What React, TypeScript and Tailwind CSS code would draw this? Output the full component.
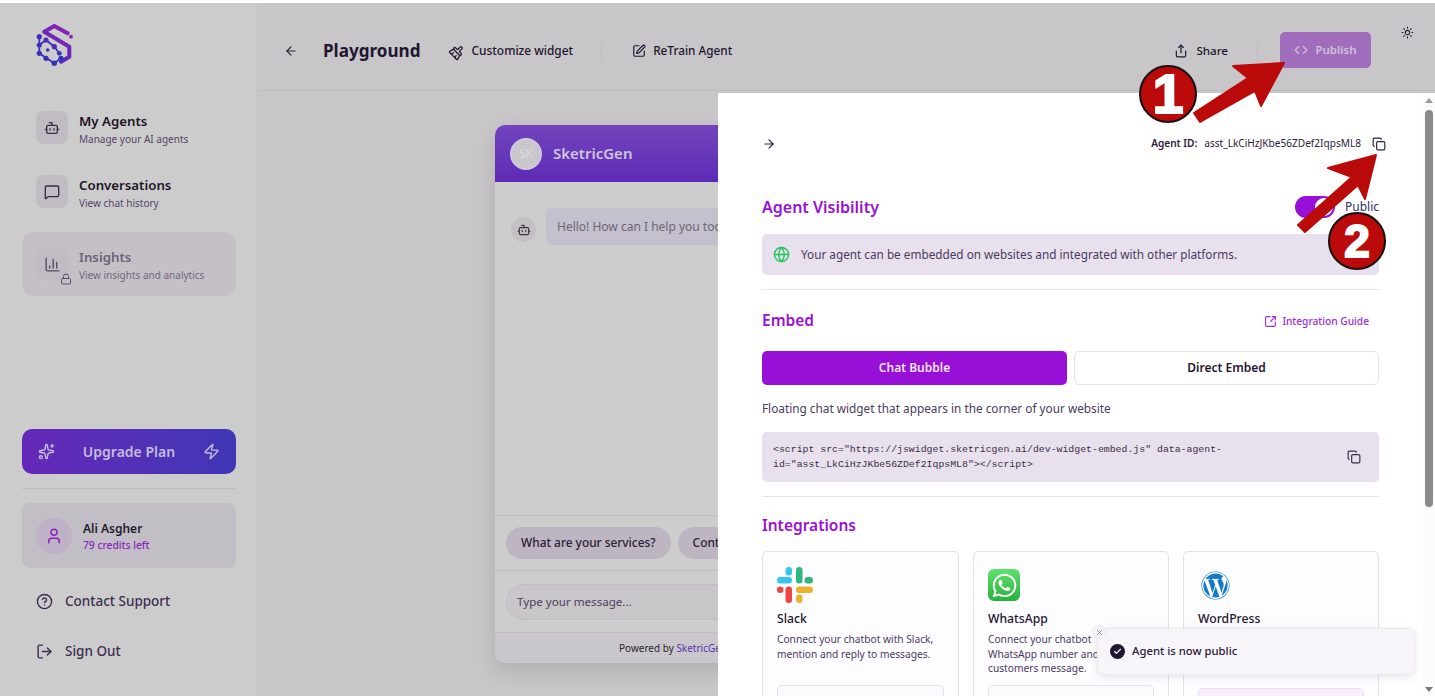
import {
  ArrowLeft,
  ArrowRight,
  Bot,
  BrushCleaning,
  ChartColumn,
  Check,
  CircleHelp,
  Code,
  Copy,
  Globe,
  Lock,
  LogOut,
  MessageSquare,
  Share,
  Sparkles,
  SquareArrowOutUpRight,
  SquarePen,
  Sun,
  User,
  X,
  Zap,
} from 'lucide-react';
import { FaWhatsapp, FaWordpress } from 'react-icons/fa';

function Logo() {
  return (
    <svg width="38" height="44" viewBox="0 0 38 44" fill="none">
      <defs>
        <linearGradient id="logo" x1="30" y1="4" x2="8" y2="36" gradientUnits="userSpaceOnUse">
          <stop stopColor="#8a22b8" />
          <stop offset="1" stopColor="#4a2cb8" />
        </linearGradient>
      </defs>
      <path
        d="M31.7 9.3 18.3 1.900 8.300 7.700l25 15v10L25 37.700"
        stroke="url(#logo)"
        strokeWidth="4"
        strokeLinejoin="round"
        strokeLinecap="round"
      />
      <path
        d="M3.300 12.700v16.600l15 10 6.700-5M10 16l8.300 6.700 5 6.600M3.300 21 10 16"
        stroke="#3a32b8"
        strokeWidth="1.800"
      />
      <circle cx="35" cy="12.700" r="1.900" fill="#8a22b8" />
      <circle cx="3.300" cy="12.700" r="2.600" fill="#4030b8" />
      <circle cx="3.300" cy="21" r="2.600" fill="#3a32b8" />
      <circle cx="3.300" cy="29.300" r="2.600" fill="#3532b8" />
      <circle cx="10" cy="34.300" r="2.600" fill="#3532b8" />
      <circle cx="18.300" cy="39.300" r="2.700" fill="#2f35b5" />
      <circle cx="25" cy="34.300" r="2.600" fill="#3532b8" />
      <circle cx="10" cy="16" r="2.600" fill="#4a2fb8" />
      <circle cx="18.300" cy="22.700" r="2.600" fill="#4a2fb8" />
      <circle cx="23.300" cy="29.300" r="2.400" fill="#3c32b8" />
      <circle cx="11.700" cy="26" r="1.800" fill="#3c32b8" />
    </svg>
  );
}

function SlackLogo() {
  return (
    <svg width="36" height="36" viewBox="0 0 36 36">
      <rect x="0" y="10" width="15" height="6.500" rx="3.250" fill="#36c5f0" />
      <rect x="8.500" y="0" width="6.500" height="8.500" rx="3.250" fill="#36c5f0" />
      <rect x="19" y="0" width="6.500" height="16.500" rx="3.250" fill="#2eb67d" />
      <rect x="27.500" y="10" width="8.500" height="6.500" rx="3.250" fill="#2eb67d" />
      <rect x="0" y="19.500" width="6.500" height="6.500" rx="3.250" fill="#ef4444" />
      <rect x="8.500" y="19.500" width="6.500" height="16.500" rx="3.250" fill="#ef4444" />
      <rect x="19" y="19.500" width="17" height="6.500" rx="3.250" fill="#ecb22e" />
      <rect x="19" y="27.500" width="6.500" height="8.500" rx="3.250" fill="#ecb22e" />
    </svg>
  );
}

function NavItem({
  icon,
  title,
  sub,
}: {
  icon: React.ReactNode;
  title: string;
  sub: string;
}) {
  return (
    <div className="flex items-start gap-[11px] px-[14px]">
      <div className="flex h-[33px] w-[32px] items-center justify-center rounded-[8px] bg-[#c1bcc3] text-[#3b2a4a]">
        {icon}
      </div>
      <div className="pt-[1px]">
        <div className="text-[13.25px] font-semibold leading-[18px] text-[#1d1426]">{title}</div>
        <div className="text-[10px] leading-[18px] text-[#56456a]">{sub}</div>
      </div>
    </div>
  );
}

function Sidebar() {
  return (
    <aside className="flex w-[258px] shrink-0 flex-col border-r border-[#c2bfc5] bg-[#cccccc] pl-[22px] pr-[21px]">
      <div className="mt-[21px] ml-[14px] h-[44px] shrink-0">
        <Logo />
      </div>
      <div className="mt-[43px]">
        <NavItem icon={<Bot size={16} />} title="My Agents" sub="Manage your AI agents" />
      </div>
      <div className="mt-[27px]">
        <NavItem icon={<MessageSquare size={16} />} title="Conversations" sub="View chat history" />
      </div>
      <div className="mt-[20px] flex h-[64px] shrink-0 items-center gap-[11px] rounded-[12px] bg-[#c4c0c6] px-[14px]">
        <div className="relative flex h-[33px] w-[32px] items-center justify-center rounded-[8px] bg-[#c1bcc3] text-[#5a4c68]">
          <ChartColumn size={17} />
          <Lock size={12} className="absolute -right-[4px] -bottom-[4px] text-[#5a4c68]" />
        </div>
        <div className="pt-[3px]">
          <div className="text-[13.25px] font-semibold leading-[18px] text-[#6e6078]">Insights</div>
          <div className="text-[10px] leading-[18px] text-[#75677f]">View insights and analytics</div>
        </div>
      </div>

      <div className="mt-[133px] flex h-[45px] shrink-0 items-center justify-between rounded-[10px] bg-gradient-to-r from-[#6528b8] to-[#3f36b5] px-[16px] text-[#c4bcdc]">
        <Sparkles size={17} />
        <span className="text-[14px] font-semibold">Upgrade Plan</span>
        <Zap size={17} />
      </div>
      <div className="mt-[14px] h-px shrink-0 bg-[#bfbcc6]" />
      <div className="mt-[14px] flex h-[65px] shrink-0 items-center gap-[11px] rounded-[8px] bg-[#c2bec6] px-[14px]">
        <div className="flex h-[36px] w-[36px] items-center justify-center rounded-full bg-[#bfb1c6] text-[#8a24bd]">
          <User size={18} />
        </div>
        <div className="pt-[2px]">
          <div className="text-[12px] font-semibold leading-[16px] text-[#241a30]">Ali Asgher</div>
          <div className="text-[10.25px] font-medium leading-[16px] text-[#8a24bd]">79 credits left</div>
        </div>
      </div>
      <div className="mt-[23px] flex items-center gap-[12px] px-[14px] text-[#3f2c52]">
        <CircleHelp size={17} />
        <span className="text-[13.5px] font-medium leading-[20px]">Contact Support</span>
      </div>
      <div className="mt-[30px] flex items-center gap-[12px] px-[14px] text-[#3f2c52]">
        <LogOut size={17} />
        <span className="text-[13.5px] font-medium leading-[20px]">Sign Out</span>
      </div>
    </aside>
  );
}

function Header() {
  return (
    <header className="flex h-[88px] shrink-0 items-center border-b border-[#bfbcc2] pl-[26px] pr-[64px] pt-[9px] text-[#1f1630]">
      <ArrowLeft size={14} className="text-[#2c2238]" />
      <h1 className="ml-[25px] text-[17.1px] font-bold">Playground</h1>
      <BrushCleaning size={15} className="ml-[29px] rotate-45" />
      <span className="ml-[7px] text-[11.9px] font-medium">Customize widget</span>
      <div className="ml-[28px] h-[21px] w-px bg-[#bdbac0]" />
      <SquarePen size={14} className="ml-[30px]" />
      <span className="ml-[7px] text-[11.8px] font-medium">ReTrain Agent</span>
      <Share size={14} className="ml-auto" />
      <span className="ml-[8px] text-[11.6px] font-medium">Share</span>
      <div className="ml-[29px] h-[21px] w-px bg-[#bdbac0]" />
      <div className="mb-[2px] ml-[22px] flex h-[36px] w-[91px] items-center justify-center gap-[7px] rounded-[5px] bg-[#a06cbc] text-[11.5px] font-semibold text-[#cfc3d8]">
        <Code size={14} />
        Publish
      </div>
    </header>
  );
}

function ChatWidget() {
  return (
    <div className="ml-[237px] mt-[34px] flex h-[538px] w-[400px] flex-col overflow-hidden rounded-[10px] bg-[#cdcdcd] shadow-[0_8px_20px_rgba(0,0,0,0.12)]">
      <div className="flex h-[57px] shrink-0 items-center gap-[11px] bg-gradient-to-b from-[#7344bd] to-[#5d2ab6] px-[15px]">
        <div className="flex h-[32px] w-[32px] items-center justify-center rounded-full border-2 border-[#d0cad8] bg-[#c9c7cc] text-[12px] text-[#dcd9df]">
          SK
        </div>
        <span className="text-[15px] font-semibold text-[#cfc6de]">SketricGen</span>
      </div>
      <div className="flex flex-1 items-start gap-[10px] px-[16px] pt-[26px]">
        <div className="mt-[9px] flex h-[25px] w-[25px] items-center justify-center rounded-full bg-[#c2c0c3] text-[#3f3548]">
          <Bot size={14} />
        </div>
        <div className="whitespace-nowrap rounded-[6px] bg-[#c4c0ce] px-[11px] pb-[9px] pt-[10px] text-[12px] leading-[18px] text-[#6d6674]">
          Hello! How can I help you today?
        </div>
      </div>
      <div className="flex h-[56px] shrink-0 items-center gap-[7px] border-y border-[#c0bcc8] pl-[11px]">
        <div className="flex h-[32px] items-center whitespace-nowrap rounded-full bg-[#bdb5c1] px-[15px] text-[11.9px] font-medium text-[#2c2038]">
          What are your services?
        </div>
        <div className="flex h-[32px] items-center whitespace-nowrap rounded-full bg-[#bdb5c1] px-[15px] text-[11.9px] font-medium text-[#2c2038]">
          Contact support
        </div>
      </div>
      <div className="flex h-[62px] shrink-0 items-center border-b border-[#c0bcc8] pl-[11px]">
        <div className="flex h-[36px] w-[360px] items-center rounded-full border border-[#c0bcc8] bg-[#c9c6ca] px-[10px] text-[11.6px] text-[#4d3f5c]">
          Type your message...
        </div>
      </div>
      <div className="flex h-[30px] shrink-0 items-center bg-[#c9c7cb] pl-[124px] text-[10px] text-[#2c2430]">
        <span className="whitespace-nowrap">
          Powered by <span className="text-[#5b32b0]">SketricGen</span>
        </span>
      </div>
    </div>
  );
}

function IntegrationCard({
  logo,
  name,
  children,
  buttonClass,
}: {
  logo: React.ReactNode;
  name: string;
  children?: React.ReactNode;
  buttonClass: string;
}) {
  return (
    <div className="flex h-[200px] w-full flex-col rounded-[5px] border border-[#e4e0ec] bg-[#fdfcff] px-[14px] pt-[14px]">
      <div className="flex h-[38px] shrink-0 items-center">{logo}</div>
      <div className="mt-[6px] shrink-0 text-[12.2px] font-medium leading-[18px] text-[#1f1630]">{name}</div>
      <p className="mt-[4px] h-[53px] shrink-0 whitespace-nowrap text-[10.2px] leading-[14.5px] text-[#4b3a5e]">
        {children}
      </p>
      <div className={`h-[40px] shrink-0 rounded-[5px] border border-[#e4e0ec] ${buttonClass}`} />
    </div>
  );
}

function DrawerPanel() {
  return (
    <div className="absolute bottom-0 left-[718px] right-0 top-[93px] overflow-hidden bg-white">
      <div className="w-[661px] pl-[44px]">
        <div className="mt-[37px] flex h-[28px] items-center justify-between text-[#2c2038]">
          <ArrowRight size={14} />
          <div className="flex items-center text-[10.1px]">
            <span className="font-semibold">Agent ID:</span>
            <span className="ml-[7px]">asst_LkCiHzJKbe56ZDef2IqpsML8</span>
            <Copy size={14} className="ml-[11px] mr-[-7px]" />
          </div>
        </div>
        <div className="mt-[35px] flex h-[28px] items-center justify-between">
          <h2 className="text-[16px] font-semibold text-[#9810d8]">Agent Visibility</h2>
          <div className="flex items-center gap-[10px]">
            <div className="flex h-[22px] w-[40px] items-center justify-end rounded-full bg-[#9810d8] pr-[2px]">
              <div className="h-[18px] w-[18px] rounded-full bg-white" />
            </div>
            <span className="text-[12px] text-[#2c2f60]">Public</span>
          </div>
        </div>
        <div className="mt-[13px] flex h-[41px] items-center gap-[11px] rounded-[5px] bg-[#e8e0ec] px-[11px] text-[11.75px] text-[#4b3a5e]">
          <Globe size={17} className="text-[#22c55e]" />
          Your agent can be embedded on websites and integrated with other platforms.
        </div>
        <div className="mt-[14px] h-px bg-[#e6e3ea]" />
        <div className="mt-[17px] flex h-[28px] items-center justify-between">
          <h2 className="text-[15.5px] font-semibold text-[#9810d8]">Embed</h2>
          <div className="mr-[10px] flex items-center gap-[5px] pt-[1px] text-[10.2px] font-medium text-[#9d2cdc]">
            <SquareArrowOutUpRight size={13} />
            Integration Guide
          </div>
        </div>
        <div className="mt-[16px] flex gap-[7px]">
          <div className="flex h-[34px] w-[305px] items-center justify-center rounded-[5px] bg-[#9810d8] text-[12px] font-semibold text-[#f3e5fb]">
            Chat Bubble
          </div>
          <div className="flex h-[34px] w-[305px] items-center justify-center rounded-[5px] border border-[#e6e2ec] text-[12px] font-semibold text-[#1f1630]">
            Direct Embed
          </div>
        </div>
        <p className="mt-[14px] text-[11.8px] leading-[18px] text-[#4b3a5e]">
          Floating chat widget that appears in the corner of your website
        </p>
        <div className="relative mt-[15px] h-[50px] rounded-[5px] bg-[#e8e0ec] pl-[11px] pr-[120px] pt-[11px] font-['Liberation_Mono',monospace] text-[9.85px] leading-[14.5px] text-[#3b2f48]">
          {'<script src="https://jswidget.sketricgen.ai/dev-widget-embed.js" data-agent-id="asst_LkCiHzJKbe56ZDef2IqpsML8"></script>'}
          <Copy size={14} className="absolute right-[18px] top-[18px]" />
        </div>
        <div className="mt-[14px] h-px bg-[#e6e3ea]" />
        <h2 className="mt-[16px] text-[15.5px] font-semibold leading-[24px] text-[#9810d8]">Integrations</h2>
        <div className="mt-[14px] grid grid-cols-[197px_196px_196px] gap-[14px]">
          <IntegrationCard logo={<SlackLogo />} name="Slack" buttonClass="bg-[#fbfafc]">
            Connect your chatbot with Slack,
            <br />
            mention and reply to messages.
          </IntegrationCard>
          <IntegrationCard
            logo={
              <div className="flex h-[32px] w-[32px] items-center justify-center rounded-[6px] bg-gradient-to-b from-[#5fe06f] to-[#22b53a] text-white">
                <FaWhatsapp size={27} />
              </div>
            }
            name="WhatsApp"
            buttonClass="bg-[#fbfafc]"
          >
            Connect your chatbot
            <br />
            WhatsApp number and
            <br />
            customers message.
          </IntegrationCard>
          <IntegrationCard
            logo={<FaWordpress size={29} className="ml-[3px] text-[#117ac9]" />}
            name="WordPress"
            buttonClass="mt-[3px] bg-[#f8eefc]"
          />
        </div>
      </div>
      {/* scrollbar */}
      <div className="absolute bottom-0 right-0 top-0 flex w-[12px] flex-col items-center bg-[#fbfbfb]">
        <div className="mt-[5px] h-0 w-0 border-x-[4px] border-b-[5px] border-x-transparent border-b-[#9a9a9a]" />
        <div className="mt-[7px] h-[397px] w-[8px] rounded-full bg-[#8b8b8b]" />
        <div className="mb-[4px] mt-auto h-0 w-0 border-x-[4px] border-t-[5px] border-x-transparent border-t-[#7a7a7a]" />
      </div>
    </div>
  );
}

function Toast() {
  return (
    <div className="absolute left-[1097px] top-[628px] flex h-[47px] w-[318px] items-center gap-[7px] rounded-[7px] border border-[#ece8f0] bg-[#f8f5fa] pl-[12px] shadow-[0_2px_8px_rgba(0,0,0,0.1)]">
      <div className="flex h-[15px] w-[15px] items-center justify-center rounded-full bg-[#1f1630] text-white">
        <Check size={9} strokeWidth={3} />
      </div>
      <span className="text-[11.3px] font-medium text-[#2c2038]">Agent is now public</span>
      <div className="absolute -left-[6px] -top-[4px] flex h-[14px] w-[14px] items-center justify-center rounded-full border border-[#ece8f0] bg-[#f8f5fa] text-[#777]">
        <X size={9} />
      </div>
    </div>
  );
}

function Callout({
  n,
  x,
  y,
  sizeClass,
}: {
  n: string;
  x: number;
  y: number;
  sizeClass: string;
}) {
  return (
    <div
      className={`absolute flex h-[58px] w-[58px] items-center justify-center rounded-full border-2 border-[#171010] bg-[#bb0a0a] font-['Liberation_Sans',sans-serif] font-bold leading-none text-white [-webkit-text-stroke:2px_white] ${sizeClass}`}
      style={{ left: x - 29, top: y - 29 }}
    >
      {n}
    </div>
  );
}

function Annotations() {
  return (
    <>
      <svg className="pointer-events-none absolute left-0 top-0" width="1435" height="696">
        <polygon
          fill="#bb0a0a"
          stroke="#bb0a0a"
          strokeLinejoin="round"
          strokeWidth="2"
          points="1194,113 1248,78 1233,66 1284,63 1261,106 1255,91 1200,122"
        />
        <polygon
          fill="#bb0a0a"
          stroke="#bb0a0a"
          strokeLinejoin="round"
          strokeWidth="2"
          points="1298,225 1352,177 1328,168 1376,155 1365,199 1358,185 1305,232"
        />
      </svg>
      <Callout n="1" x={1168} y={94} sizeClass="text-[56px]" />
      <Callout n="2" x={1357} y={241} sizeClass="text-[46px]" />
    </>
  );
}

export default function App() {
  return (
    <div className="relative h-[696px] w-[1435px] overflow-hidden bg-white pt-[3px] font-['Noto_Sans',sans-serif]">
      <div className="flex h-[693px]">
        <Sidebar />
        <main className="flex flex-1 flex-col bg-[#c8c6c9]">
          <Header />
          <ChatWidget />
        </main>
      </div>
      <Sun size={13} className="absolute left-[1401px] top-[26px] text-[#2c2238]" />
      <DrawerPanel />
      <Toast />
      <Annotations />
    </div>
  );
}
